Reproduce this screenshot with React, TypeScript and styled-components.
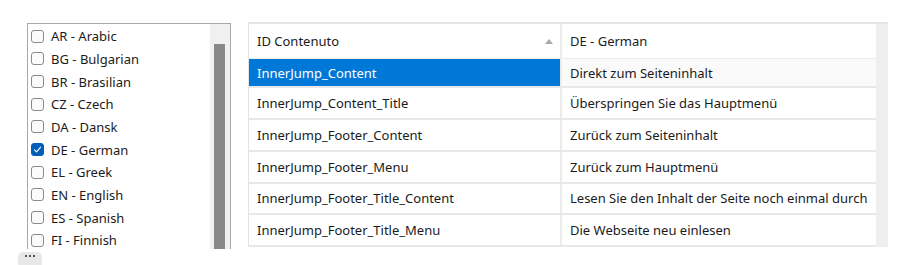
import styled, { createGlobalStyle } from "styled-components";

const GlobalStyle = createGlobalStyle`
  html, body {
    margin: 0;
    padding: 0;
    background: #ffffff;
    overflow: hidden;
  }
  body {
    font-family: "Noto Sans", "Open Sans", sans-serif;
    color: #1b1b1b;
  }
`;

const languages = [
  { code: "AR", name: "Arabic" },
  { code: "BG", name: "Bulgarian" },
  { code: "BR", name: "Brasilian" },
  { code: "CZ", name: "Czech" },
  { code: "DA", name: "Dansk" },
  { code: "DE", name: "German", checked: true },
  { code: "EL", name: "Greek" },
  { code: "EN", name: "English" },
  { code: "ES", name: "Spanish" },
  { code: "FI", name: "Finnish" },
];

const rows = [
  ["InnerJump_Content", "Direkt zum Seiteninhalt"],
  ["InnerJump_Content_Title", "Überspringen Sie das Hauptmenü"],
  ["InnerJump_Footer_Content", "Zurück zum Seiteninhalt"],
  ["InnerJump_Footer_Menu", "Zurück zum Hauptmenü"],
  ["InnerJump_Footer_Title_Content", "Lesen Sie den Inhalt der Seite noch einmal durch"],
  ["InnerJump_Footer_Title_Menu", "Die Webseite neu einlesen"],
];

export default function App() {
  return (
    <>
      <GlobalStyle />
      <Page>
        <Panels>
          <LangList>
            <LangItems>
              {languages.map((l) => (
                <LangRow key={l.code}>
                  <Check $checked={!!l.checked}>
                    {l.checked && (
                      <svg width="9" height="9" viewBox="0 0 9 9">
                        <path
                          d="M1.5 4.8 L3.6 6.8 L7.6 2.2"
                          fill="none"
                          stroke="#ffffff"
                          strokeWidth="1.1"
                          strokeLinecap="round"
                          strokeLinejoin="round"
                        />
                      </svg>
                    )}
                  </Check>
                  {l.code} - {l.name}
                </LangRow>
              ))}
            </LangItems>
            <ListScroll>
              <ListThumb />
            </ListScroll>
          </LangList>

          <TableFrame>
            <Grid>
              <HeaderRow>
                <HeaderCell>
                  ID Contenuto
                  <SortArrow />
                </HeaderCell>
                <HeaderCell>DE - German</HeaderCell>
              </HeaderRow>
              {rows.map(([id, text], i) => (
                <BodyRow key={id} $first={i === 0}>
                  <KeyCell $selected={i === 0}>{id}</KeyCell>
                  <ValueCell $hover={i === 0}>{text}</ValueCell>
                </BodyRow>
              ))}
            </Grid>
            <TableScroll />
          </TableFrame>
        </Panels>
        <Toolbar>
          <MoreButton>
            <Dot />
            <Dot />
            <Dot />
          </MoreButton>
        </Toolbar>
      </Page>
    </>
  );
}

const Page = styled.div`
  display: flex;
  flex-direction: column;
  width: 903px;
  height: 265px;
`;

const Panels = styled.div`
  display: flex;
  align-items: flex-start;
  padding: 22px 0 0 27px;
  gap: 17px;
`;

const LangList = styled.div`
  display: flex;
  margin-top: 1px;
  width: 202px;
  height: 225px;
  border: 1px solid #a8a8a8;
  border-bottom: none;
  overflow: hidden;
`;

const LangItems = styled.div`
  flex: 1;
  padding-top: 1px;
`;

const LangRow = styled.div`
  display: flex;
  align-items: center;
  height: 22.67px;
  padding-left: 3px;
  font-size: 13px;
  white-space: nowrap;
`;

const Check = styled.span<{ $checked: boolean }>`
  display: inline-flex;
  align-items: center;
  justify-content: center;
  box-sizing: border-box;
  width: 13px;
  height: 13px;
  margin-right: 7px;
  border-radius: 3px;
  border: 1px solid ${(p) => (p.$checked ? "#005fb8" : "#8a8a8a")};
  background: ${(p) => (p.$checked ? "#005fb8" : "#fbfbfb")};
`;

const ListScroll = styled.div`
  width: 20px;
  background: #f0f0f0;
  padding: 20px 5px 0 4px;
  box-sizing: border-box;
`;

const ListThumb = styled.div`
  width: 11px;
  height: 220px;
  background: #888888;
`;

const TableFrame = styled.div`
  display: flex;
  width: 640px;
  height: 225px;
  border-top: 2px solid #e6e6e6;
  border-left: 1px solid #e3e3e3;
  box-sizing: border-box;
`;

const Grid = styled.div`
  flex: 1;
  display: flex;
  flex-direction: column;
`;

const HeaderRow = styled.div`
  display: grid;
  grid-template-columns: 313px 1fr;
  height: 34px;
  border-bottom: 1px solid #ececec;
  background: #ffffff;
`;

const HeaderCell = styled.div`
  position: relative;
  display: flex;
  align-items: center;
  padding-left: 8px;
  font-size: 13px;
  border-right: 2px solid #ececec;
  &:last-child {
    border-right: none;
  }
`;

const SortArrow = styled.span`
  position: absolute;
  right: 7px;
  top: 15px;
  width: 0;
  height: 0;
  border-left: 4px solid transparent;
  border-right: 4px solid transparent;
  border-bottom: 5px solid #a9a9a9;
`;

const BodyRow = styled.div<{ $first: boolean }>`
  display: grid;
  grid-template-columns: 313px 1fr;
  height: ${(p) => (p.$first ? "30px" : "32px")};
  border-bottom: 2px solid #e8e8e8;
  box-sizing: border-box;
  font-size: 13px;
`;

const KeyCell = styled.div<{ $selected: boolean }>`
  display: flex;
  align-items: center;
  padding-left: 8px;
  border-right: 2px solid #ececec;
  background: ${(p) => (p.$selected ? "#0078d7" : "#ffffff")};
  color: ${(p) => (p.$selected ? "#ffffff" : "#1b1b1b")};
`;

const ValueCell = styled.div<{ $hover: boolean }>`
  display: flex;
  align-items: center;
  padding-left: 8px;
  background: ${(p) => (p.$hover ? "#fafafa" : "#ffffff")};
  white-space: nowrap;
`;

const TableScroll = styled.div`
  width: 12px;
  background: #efefef;
`;

const Toolbar = styled.div`
  display: flex;
  padding: 3px 0 0 18px;
`;

const MoreButton = styled.div`
  display: flex;
  align-items: flex-start;
  justify-content: center;
  gap: 2px;
  width: 24px;
  height: 16px;
  padding-top: 3px;
  box-sizing: border-box;
  border-radius: 5px;
  background: #e8e8e8;
`;

const Dot = styled.span`
  width: 2px;
  height: 2px;
  background: #555555;
`;
